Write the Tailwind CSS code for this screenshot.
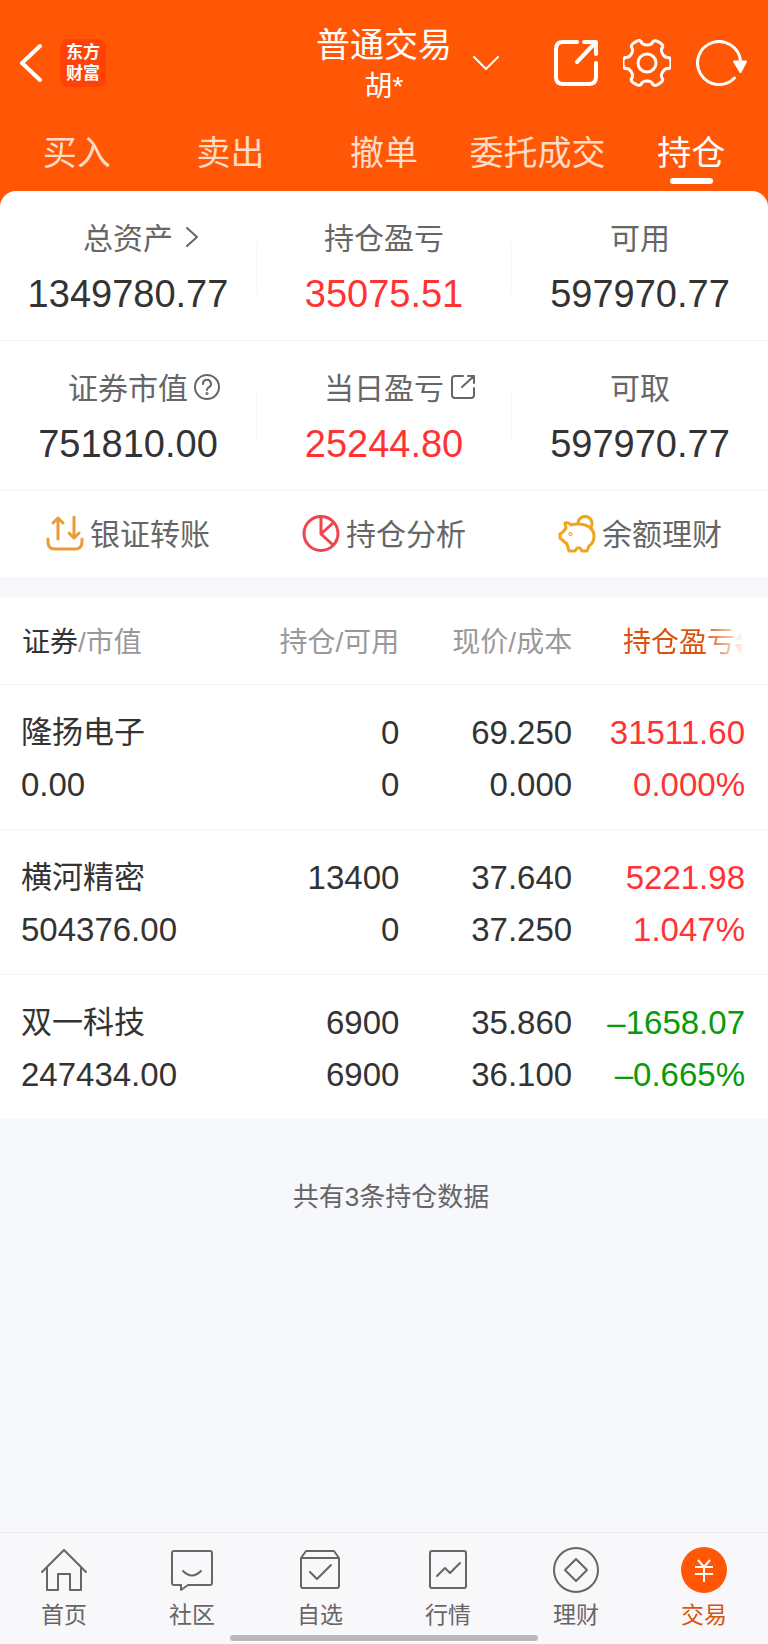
<!DOCTYPE html>
<html lang="zh-CN">
<head>
  <meta charset="UTF-8">
  <meta name="viewport" content="width=device-width, initial-scale=1.0">
  <title>普通交易 - 持仓</title>
  <script src="https://cdn.jsdelivr.net/npm/@tailwindcss/browser@4"></script>
</head>
<body class="bg-[#f7f8fb] min-h-screen flex flex-col text-[#333] font-['Liberation_Sans','Noto_Sans_CJK_SC',sans-serif]">

  <div class="bg-[#ff5706]">

    <!-- Header -->
    <header class="text-white pt-[21px]">
      <div class="grid grid-cols-[1fr_auto_1fr] items-center">
        <div class="flex items-center gap-[18px] pl-[18px]">
          <button aria-label="返回">
            <svg class="w-6 h-10" viewBox="0 0 24 40" fill="none" stroke="currentColor" stroke-width="4" stroke-linecap="round" stroke-linejoin="round"><path d="M22 3L4 20L22 37"/></svg>
          </button>
          <div class="w-[46px] h-12 rounded-lg bg-[#ff4208] flex flex-col items-center justify-center font-bold text-[17px] leading-[21px]">
            <span>东方</span>
            <span>财富</span>
          </div>
        </div>
        <div class="text-center">
          <h1 class="text-[34px] leading-[48px]">普通交易</h1>
          <p class="text-[28px] leading-9">胡*</p>
        </div>
        <div class="flex items-center justify-between pl-5 pr-[21px]">
          <button aria-label="切换账户">
            <svg class="w-7 h-4" viewBox="0 0 28 16" fill="none" stroke="currentColor" stroke-width="2" stroke-linecap="round" stroke-linejoin="round"><path d="M2 2L14 14L26 2"/></svg>
          </button>
          <div class="flex items-center gap-[25px]">
            <button aria-label="分享">
              <svg class="w-[44px] h-12" viewBox="0 0 44 48" fill="none" stroke="currentColor" stroke-width="4" stroke-linecap="round" stroke-linejoin="round"><path d="M23 3H9Q2 3 2 10V38Q2 45 9 45H35Q42 45 42 38V24M30 3H42V15M41 4L23 23"/></svg>
            </button>
            <button aria-label="设置">
              <svg class="w-12 h-12" viewBox="-24 -24 48 48" fill="none" stroke="currentColor" stroke-width="3" stroke-linecap="round" stroke-linejoin="round">
                <defs><path id="tooth" d="M-6 -21.500C-5 -18.500 -2 -18 0 -18C2 -18 5 -18.500 6 -21.500Q7.500 -23 10.500 -21.600L14 -19.600Q16.200 -18.200 15.600 -15.900"/></defs>
                <use href="#tooth"/>
                <use href="#tooth" transform="rotate(60)"/>
                <use href="#tooth" transform="rotate(120)"/>
                <use href="#tooth" transform="rotate(180)"/>
                <use href="#tooth" transform="rotate(240)"/>
                <use href="#tooth" transform="rotate(300)"/>
                <circle r="9"/>
              </svg>
            </button>
            <button aria-label="刷新">
              <svg class="w-[51px] h-12" viewBox="0 0 51 48" fill="none" stroke="currentColor" stroke-width="3" stroke-linecap="round"><path d="M44.500 22A21.500 21.500 0 1 0 38.500 39"/><path d="M38 22.500H50L44.500 33Z" fill="currentColor" stroke-width="2" stroke-linejoin="round"/></svg>
            </button>
          </div>
        </div>
      </div>

      <!-- Tabs -->
      <nav class="grid grid-cols-5 pt-6 pb-[7px] text-[34px] leading-[48px] text-center">
        <a href="#" class="text-[#ffdcc8]">买入</a>
        <a href="#" class="text-[#ffdcc8]">卖出</a>
        <a href="#" class="text-[#ffdcc8]">撤单</a>
        <a href="#" class="text-[#ffdcc8] whitespace-nowrap">委托成交</a>
        <a href="#" class="flex flex-col items-center">
          持仓
          <span class="w-[43px] h-1.5 mt-px rounded-full bg-white"></span>
        </a>
      </nav>
    </header>

    <!-- Account summary -->
    <section class="bg-white rounded-t-2xl text-center">
      <div class="grid grid-cols-3 items-center border-b border-[#f4f4f4] pt-7 pb-[22px]">
        <div>
          <a href="#" class="relative inline-block align-top text-[30px] leading-10 text-[#666]">总资产
            <svg class="absolute left-full top-[7px] ml-3 w-[14px] h-[22px]" viewBox="0 0 14 22" fill="none" stroke="currentColor" stroke-width="2" stroke-linecap="round" stroke-linejoin="round"><path d="M2 2L12 11L2 20"/></svg>
          </a>
          <div class="mt-[11px] text-[38px] leading-[48px]">1349780.77</div>
        </div>
        <div class="relative">
          <div class="text-[30px] leading-10 text-[#666]">持仓盈亏</div>
          <div class="mt-[11px] text-[38px] leading-[48px] text-[#ff3333]">35075.51</div>
          <span class="absolute left-0 top-1/4 h-12 w-px bg-[#f6f6f6]"></span>
          <span class="absolute right-0 top-1/4 h-12 w-px bg-[#f6f6f6]"></span>
        </div>
        <div>
          <div class="text-[30px] leading-10 text-[#666]">可用</div>
          <div class="mt-[11px] text-[38px] leading-[48px]">597970.77</div>
        </div>
      </div>

      <div class="grid grid-cols-3 items-center border-b border-[#f4f4f4] pt-7 pb-[22px]">
        <div>
          <div class="relative inline-block align-top text-[30px] leading-10 text-[#666]">证券市值
            <button class="absolute left-full top-[5px] ml-1.5" aria-label="说明">
              <svg class="w-[26px] h-[26px]" viewBox="0 0 26 26" fill="none" stroke="currentColor" stroke-width="2" stroke-linecap="round"><circle cx="13" cy="13" r="12"/><path d="M9 10A4 4 0 1 1 15 13.200Q13 14.500 13 16"/><circle cx="13" cy="19.500" r=".6"/></svg>
            </button>
          </div>
          <div class="mt-[11px] text-[38px] leading-[48px]">751810.00</div>
        </div>
        <div class="relative">
          <div class="relative inline-block align-top text-[30px] leading-10 text-[#666]">当日盈亏
            <button class="absolute left-full top-[5px] ml-1.5" aria-label="查看">
              <svg class="w-[26px] h-[26px]" viewBox="0 0 26 26" fill="none" stroke="currentColor" stroke-width="2" stroke-linecap="round" stroke-linejoin="round"><path d="M13 2H5Q2 2 2 5V21Q2 24 5 24H21Q24 24 24 21V14M18 2H24V9M24 2L12 13"/></svg>
            </button>
          </div>
          <div class="mt-[11px] text-[38px] leading-[48px] text-[#ff3333]">25244.80</div>
          <span class="absolute left-0 top-1/4 h-12 w-px bg-[#f6f6f6]"></span>
          <span class="absolute right-0 top-1/4 h-12 w-px bg-[#f6f6f6]"></span>
        </div>
        <div>
          <div class="text-[30px] leading-10 text-[#666]">可取</div>
          <div class="mt-[11px] text-[38px] leading-[48px]">597970.77</div>
        </div>
      </div>

      <!-- Shortcuts -->
      <div class="grid grid-cols-3 pt-6 pb-[22px] text-[30px] leading-10 text-[#666]">
        <a href="#" class="flex items-start justify-center gap-1.5">
          <svg class="w-[38px] h-[38px]" viewBox="0 0 38 38" fill="none" stroke="#eb9c38" stroke-width="3" stroke-linecap="round" stroke-linejoin="round"><path d="M2 24V27Q2 34 9 34H29Q36 34 36 27V24M12 24V3M7 8L12 3L17 8M28 2V23M23 18L28 23L33 18"/></svg>
          银证转账
        </a>
        <a href="#" class="flex items-start justify-center gap-1.5">
          <svg class="w-[38px] h-[38px]" viewBox="0 0 38 38" fill="none" stroke="#f0434d" stroke-width="3" stroke-linejoin="round"><circle cx="19" cy="18.500" r="17"/><path d="M19 2V19L31 8M19 19L31 30"/></svg>
          持仓分析
        </a>
        <a href="#" class="flex items-start justify-center gap-1.5">
          <svg class="w-[38px] h-[38px]" viewBox="0 0 38 38" fill="none" stroke="#efa51c" stroke-width="3" stroke-linecap="round" stroke-linejoin="round"><path d="M7 8Q11 7 13 10Q20 8 27 10Q36 13 36 21Q36 28 31 31L29 36H24L22 33H19L17 36H11L9 29L2 23V19L5 17L8 13Z"/><path d="M20 8A7 7 0 1 1 33 12"/><circle cx="12.500" cy="19" r=".6"/></svg>
          余额理财
        </a>
      </div>
    </section>
  </div>

  <!-- Holdings -->
  <main class="mt-[21px]">
    <table class="w-full table-fixed bg-white text-right text-[33px] leading-[52px]">
      <colgroup>
        <col class="w-[32%]">
        <col class="w-[20%]">
        <col class="w-[22.5%]">
        <col>
      </colgroup>
      <thead class="text-[28px] leading-[42px] text-[#999]">
        <tr class="border-b border-[#f4f4f4]">
          <th class="pt-6 pb-5 pl-[22px] text-left font-normal"><span class="text-[#333]">证券</span>/市值</th>
          <th class="pt-6 pb-5 font-normal whitespace-nowrap">持仓/可用</th>
          <th class="pt-6 pb-5 font-normal whitespace-nowrap">现价/成本</th>
          <th class="pt-6 pb-5 pr-[23px] font-normal">
            <button class="inline-flex items-center align-top text-[#d9530f] whitespace-nowrap [mask-image:linear-gradient(to_right,black_65%,transparent)]">
              持仓盈亏
              <svg class="w-[10px] h-6" viewBox="0 0 10 24"><path d="M5 1L9 9H1Z" fill="#999"/><path d="M0 13H10L5 23Z" fill="#ff5706"/></svg>
            </button>
          </th>
        </tr>
      </thead>
      <tbody>
        <tr class="border-b border-[#f4f4f4]">
          <td class="pt-[22px] pb-[18px] pl-[21px] text-left">
            <div class="text-[31px]">隆扬电子</div>
            <div>0.00</div>
          </td>
          <td class="pt-[22px] pb-[18px]"><div>0</div><div>0</div></td>
          <td class="pt-[22px] pb-[18px]"><div>69.250</div><div>0.000</div></td>
          <td class="pt-[22px] pb-[18px] pr-[23px] text-[#ff3333]"><div>31511.60</div><div>0.000%</div></td>
        </tr>
        <tr class="border-b border-[#f4f4f4]">
          <td class="pt-[22px] pb-[18px] pl-[21px] text-left">
            <div class="text-[31px]">横河精密</div>
            <div>504376.00</div>
          </td>
          <td class="pt-[22px] pb-[18px]"><div>13400</div><div>0</div></td>
          <td class="pt-[22px] pb-[18px]"><div>37.640</div><div>37.250</div></td>
          <td class="pt-[22px] pb-[18px] pr-[23px] text-[#ff3333]"><div>5221.98</div><div>1.047%</div></td>
        </tr>
        <tr>
          <td class="pt-[22px] pb-[18px] pl-[21px] text-left">
            <div class="text-[31px]">双一科技</div>
            <div>247434.00</div>
          </td>
          <td class="pt-[22px] pb-[18px]"><div>6900</div><div>6900</div></td>
          <td class="pt-[22px] pb-[18px]"><div>35.860</div><div>36.100</div></td>
          <td class="pt-[22px] pb-[18px] pr-[23px] text-[#079b07]"><div>–1658.07</div><div>–0.665%</div></td>
        </tr>
      </tbody>
    </table>
    <p class="pt-[58px] pb-10 pl-3.5 text-center text-[26px] leading-10 text-[#666]">共有3条持仓数据</p>
  </main>

  <!-- Bottom navigation -->
  <footer class="mt-auto border-t border-[#ececef] bg-[#f8f8fb]">
    <nav class="grid grid-cols-6 pt-[13px] text-[23px] leading-8 text-[#666]">
      <a href="#" class="flex flex-col items-center gap-[5px]">
        <svg class="w-12 h-12" viewBox="0 0 48 48" fill="none" stroke="currentColor" stroke-width="2" stroke-linecap="round" stroke-linejoin="round"><path d="M2 26L24 4L46 26M7 22V44H18V28H30V44H41V22"/></svg>
        首页
      </a>
      <a href="#" class="flex flex-col items-center gap-[5px]">
        <svg class="w-12 h-12" viewBox="0 0 48 48" fill="none" stroke="currentColor" stroke-width="2" stroke-linecap="round" stroke-linejoin="round"><path d="M6 5H42Q44 5 44 7V37Q44 39 42 39H20L13 44V39H6Q4 39 4 37V7Q4 5 6 5ZM15 25Q24 34 33 25"/></svg>
        社区
      </a>
      <a href="#" class="flex flex-col items-center gap-[5px]">
        <svg class="w-12 h-12" viewBox="0 0 48 48" fill="none" stroke="currentColor" stroke-width="2" stroke-linecap="round" stroke-linejoin="round"><path d="M5 12L10 5H38L43 12V40Q43 42 41 42H7Q5 42 5 40ZM5 12H43M14 26L21 33L35 19"/></svg>
        自选
      </a>
      <a href="#" class="flex flex-col items-center gap-[5px]">
        <svg class="w-12 h-12" viewBox="0 0 48 48" fill="none" stroke="currentColor" stroke-width="2" stroke-linecap="round" stroke-linejoin="round"><rect x="6" y="5" width="36" height="37" rx="2"/><path d="M13 30L21 22L26 27L36 17"/></svg>
        行情
      </a>
      <a href="#" class="flex flex-col items-center gap-[5px]">
        <svg class="w-12 h-12" viewBox="0 0 48 48" fill="none" stroke="currentColor" stroke-width="2" stroke-linejoin="round"><circle cx="24" cy="24" r="22"/><path d="M24 13L35 24L24 35L13 24Z"/></svg>
        理财
      </a>
      <a href="#" class="flex flex-col items-center gap-[5px] text-[#d9530f]">
        <svg class="w-12 h-12" viewBox="0 0 48 48" fill="none" stroke="white" stroke-width="2"><circle cx="24" cy="24" r="23" fill="#ff5706" stroke="none"/><path d="M18 14L24 21L30 14M15 21H33M15 28H33M24 21V36"/></svg>
        交易
      </a>
    </nav>
    <div class="mx-auto mt-1 mb-[3px] h-1.5 w-2/5 rounded-full bg-[#b9b9bc]"></div>
  </footer>

</body>
</html>
